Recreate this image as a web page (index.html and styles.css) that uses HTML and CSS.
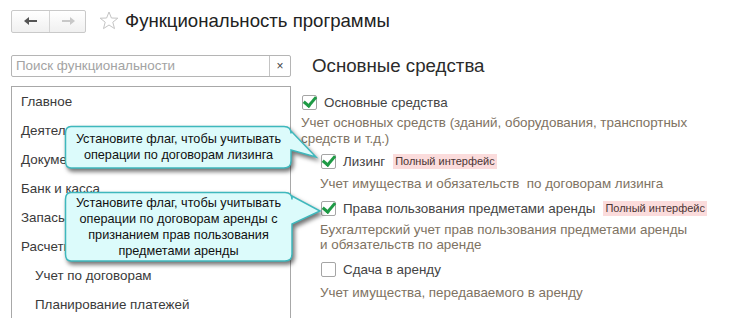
FILE: index.html
```html
<!DOCTYPE html>
<html lang="ru">
<head>
  <meta charset="UTF-8">
  <title>Функциональность программы</title>
  <link rel="stylesheet" href="styles.css">
</head>
<body>
  <div class="header">
    <div class="nav">
      <span class="navBtn back">
        <svg width="16" height="10" viewBox="0 0 16 10"><path d="M1 5 L6 1 L6 4 L14 4 L14 6 L6 6 L6 9 Z" fill="#555"/></svg>
      </span>
      <span class="navBtn fwd">
        <svg width="16" height="10" viewBox="0 0 16 10"><path d="M15 5 L10 1 L10 4 L2 4 L2 6 L10 6 L10 9 Z" fill="#c8c8c8"/></svg>
      </span>
    </div>
    <svg class="star" width="20" height="19" viewBox="0 0 20 19"><path d="M10 1 L12.4 7 L18.8 7.2 L13.8 11.2 L15.5 17.6 L10 14 L4.5 17.6 L6.2 11.2 L1.2 7.2 L7.6 7 Z" fill="none" stroke="#c4c4c4" stroke-width="1"/></svg>
    <span class="title">Функциональность программы</span>
  </div>

  <div class="main">
    <div class="left">
      <div class="search">
        <span class="searchText">Поиск функциональности</span>
        <span class="clear">×</span>
      </div>
      <div class="list">
        <div class="item">Главное</div>
        <div class="item">Деятельность</div>
        <div class="item">Документы</div>
        <div class="item">Банк и касса</div>
        <div class="item">Запасы</div>
        <div class="item">Расчеты</div>
        <div class="item sub">Учет по договорам</div>
        <div class="item sub">Планирование платежей</div>
      </div>
    </div>

    <div class="right">
      <div class="heading">Основные средства</div>

      <div class="opt first">
        <div class="row"><span class="cb on"></span><span class="label">Основные средства</span></div>
        <div class="desc">Учет основных средств (зданий, оборудования, транспортных<br>средств и т.д.)</div>
      </div>

      <div class="opt nested">
        <div class="row"><span class="cb on"></span><span class="label">Лизинг</span><span class="badge">Полный интерфейс</span></div>
        <div class="desc wide">Учет имущества и обязательств&nbsp; по договорам лизинга</div>
      </div>

      <div class="opt nested">
        <div class="row"><span class="cb on"></span><span class="label">Права пользования предметами аренды</span><span class="badge">Полный интерфейс</span></div>
        <div class="desc">Бухгалтерский учет прав пользования предметами аренды<br>и обязательств по аренде</div>
      </div>

      <div class="opt nested">
        <div class="row"><span class="cb"></span><span class="label">Сдача в аренду</span></div>
        <div class="desc wide">Учет имущества, передаваемого в аренду</div>
      </div>
    </div>
  </div>

  <div class="callout c1">
    <svg class="bubble" width="262" height="50" viewBox="0 0 262 50">
      <path d="M7 1.5 H220 Q227 1.5 227 8.5 V6 L252 32 L227 25 V36 Q227 43 220 43 H7 Q1.5 43 1.5 36 V8.5 Q1.5 1.5 7 1.5 Z" fill="#dcfbfb" stroke="#3fb8bd" stroke-width="1.5"/>
    </svg>
    <div class="calloutText t1">Установите флаг, чтобы учитывать<br>операции по договорам лизинга</div>
  </div>

  <div class="callout c2">
    <svg class="bubble" width="262" height="76" viewBox="0 0 262 76">
      <path d="M7 1.5 H221 Q228 1.5 228 8.5 V5 L256 20 L228 33 V63 Q228 70 221 70 H7 Q1.5 70 1.5 63 V8.5 Q1.5 1.5 7 1.5 Z" fill="#dcfbfb" stroke="#3fb8bd" stroke-width="1.5"/>
    </svg>
    <div class="calloutText t2">Установите флаг, чтобы учитывать<br>операции по договорам аренды с<br>признанием прав пользования<br>предметами аренды</div>
  </div>
</body>
</html>
```

FILE: styles.css
```css
body {
  margin: 0;
  font-family: "Liberation Sans", Arial, sans-serif;
  color: #333;
  background: #fff;
  overflow: hidden;
  width: 732px;
  height: 318px;
  position: relative;
}

.header {
  display: flex;
  align-items: center;
  padding: 10px 11px 0;
  height: 22px;
}

.nav {
  display: flex;
  border: 1px solid #c9c9c9;
  border-radius: 2px;
  height: 21px;
  background: linear-gradient(#fff, #f0f0f0);
}

.navBtn {
  display: flex;
  align-items: center;
  justify-content: center;
  width: 37px;
}

.navBtn.fwd {
  width: 35px;
  border-left: 1px solid #d4d4d4;
}

.star {
  margin-left: 13px;
  margin-top: -2px;
}

.title {
  margin-left: 6px;
  font-size: 18.6px;
  color: #222;
}

.main {
  display: flex;
  padding: 0 0 0 11px;
  margin-top: 23px;
}

.left {
  width: 280px;
  flex-shrink: 0;
}

.search {
  display: flex;
  height: 20px;
  border: 1px solid #b5b5b5;
  border-radius: 2px;
}

.searchText {
  flex: 1;
  font-size: 13.4px;
  color: #a3a3a3;
  line-height: 20px;
  padding-left: 4px;
}

.clear {
  width: 20px;
  border-left: 1px solid #c4c4c4;
  text-align: center;
  font-size: 12px;
  line-height: 20px;
  color: #444;
}

.list {
  margin-top: 9px;
  border: 1px solid #a8a8a8;
  border-bottom: none;
  height: 240px;
}

.item {
  height: 29px;
  line-height: 29px;
  font-size: 13.4px;
  padding-left: 9px;
  color: #3a3a3a;
}

.item.sub {
  padding-left: 23px;
}

.right {
  padding-left: 10px;
  flex: 1;
}

.heading {
  font-size: 18.7px;
  color: #2b2b2b;
  margin-left: 11px;
  height: 22px;
  line-height: 22px;
}

.opt {
  margin-top: 5px;
}

.opt.first {
  margin-top: 15px;
}

.nested {
  padding-left: 19px;
}

.nested + .nested {
  margin-top: 7px;
}

.row {
  display: flex;
  align-items: center;
  height: 20px;
  padding-left: 1px;
}

.cb {
  width: 13px;
  height: 13px;
  border: 1px solid #a5a5a5;
  border-radius: 2px;
  background: #fff;
  position: relative;
  flex-shrink: 0;
}

.cb.on::after {
  content: "";
  position: absolute;
  left: 3px;
  top: -2px;
  width: 5px;
  height: 10px;
  border-right: 3px solid #1e9a45;
  border-bottom: 3px solid #1e9a45;
  transform: rotate(40deg);
}

.label {
  font-size: 13.4px;
  color: #444;
  margin-left: 7px;
}

.badge {
  font-size: 11px;
  background: #fbdcdc;
  color: #4a3434;
  margin-left: 8px;
  padding: 1px 2px;
  line-height: 13px;
}

.desc {
  font-size: 13.4px;
  line-height: 15.5px;
  color: #7e7262;
  margin-top: 3px;
}

.desc.wide {
  margin-top: 5px;
}

.callout {
  position: absolute;
}

.bubble {
  display: block;
  filter: drop-shadow(2px 3px 2px rgba(0, 0, 0, 0.55));
}

.c1 {
  left: 64px;
  top: 125px;
}

.c2 {
  left: 64px;
  top: 191px;
}

.calloutText {
  position: absolute;
  left: 2px;
  width: 225px;
  text-align: center;
  font-size: 12.7px;
  line-height: 16px;
  color: #111;
}

.t1 {
  top: 6px;
}

.t2 {
  top: 4px;
}
```
